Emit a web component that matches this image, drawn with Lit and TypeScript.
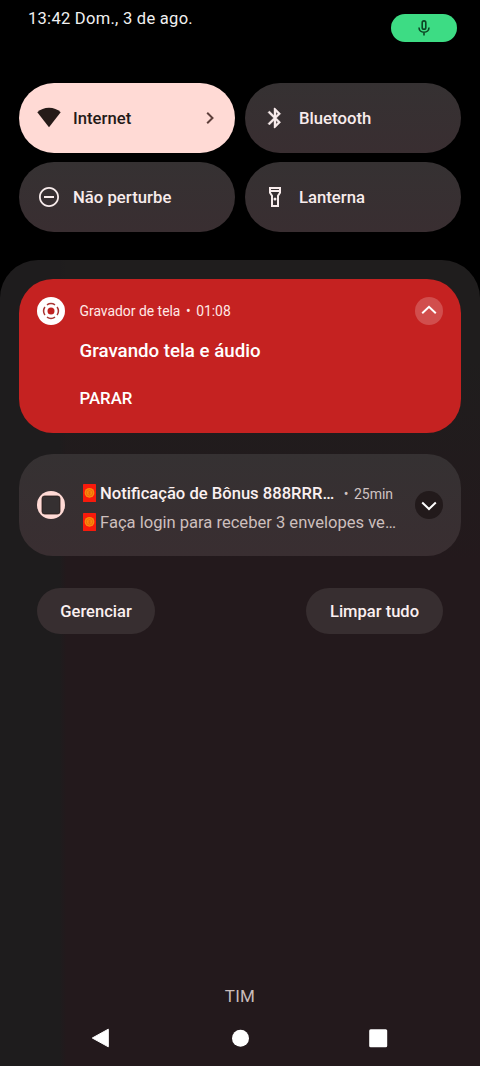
import { LitElement, html, css, svg } from "lit";
import { customElement, property } from "lit/decorators.js";

const icons = {
  wifi: svg`<path d="M.3 6.200C3.400 3.400 7.500 1.800 12 1.800s8.600 1.600 11.700 4.400L12 21.200z" fill="currentColor"/>`,
  bluetooth: svg`<path stroke="currentColor" stroke-width=".4" fill="currentColor" d="M17.710 7.710 12 2h-1v7.590L6.410 5 5 6.410 10.590 12 5 17.590 6.410 19 11 14.410V22h1l5.710-5.710L13.410 12l4.300-4.290zM13 5.830l1.880 1.880L13 9.590V5.830zm1.880 10.460L13 18.170v-3.760l1.880 1.880z"/>`,
  dnd: svg`<path fill="currentColor" d="M12 2C6.480 2 2 6.480 2 12s4.480 10 10 10 10-4.480 10-10S17.520 2 12 2zm0 18.200c-4.500 0-8.200-3.700-8.200-8.200S7.500 3.800 12 3.800s8.200 3.700 8.200 8.200-3.700 8.200-8.200 8.200zM7 11h10v2H7z"/>`,
  torch: svg`<path fill="currentColor" d="M6 2v6l2 3v11h8V11l2-3V2H6zm10 2v1H8V4h8zm-2 6.400V20h-4v-9.600L8 7.400V7h8v.4l-2 3z"/><circle cx="12" cy="14" r="1.500" fill="currentColor"/>`,
};

@customElement("quick-tile")
class QuickTile extends LitElement {
  @property() label = "";
  @property() icon: keyof typeof icons = "wifi";
  @property({ type: Boolean, reflect: true }) active = false;

  static styles = css`
    :host {
      display: flex;
      align-items: center;
      box-sizing: border-box;
      height: 70px;
      padding: 0 18.500px 0 18px;
      border-radius: 35px;
      background: linear-gradient(#353132, #392e31);
      color: #f8ecec;
    }
    :host([active]) {
      background: #ffdad5;
      color: #251a18;
    }
    .icon {
      width: 24px;
      height: 24px;
      flex: none;
    }
    .label {
      flex: 1;
      margin-left: 12.200px;
      padding-top: 2px;
      font-size: 16.700px;
      line-height: 24px;
      letter-spacing: 0.030px;
      font-weight: 500;
      white-space: nowrap;
    }
    .chevron {
      width: 14px;
      height: 14px;
      flex: none;
    }
  `;

  render() {
    return html`
      <svg class="icon" viewBox="0 0 24 24">${icons[this.icon]}</svg>
      <span class="label">${this.label}</span>
      ${this.active
        ? html`<svg class="chevron" viewBox="0 0 14 14">
            <path d="M4.200 1.700 9.500 7l-5.300 5.300" fill="none" stroke="#5d3f3b" stroke-width="2" />
          </svg>`
        : ""}
    `;
  }
}

@customElement("red-envelope")
class RedEnvelope extends LitElement {
  static styles = css`
    :host {
      display: block;
      width: 13px;
      height: 18px;
      flex: none;
    }
    .art {
      display: block;
    }
  `;
  render() {
    return html`<svg class="art" width="13" height="18" viewBox="0 0 13 18">
      <rect width="13" height="18" rx=".6" fill="#f81a0c" />
      <circle cx="6.500" cy="8.800" r="4.900" fill="#f98a0a" />
      <circle cx="6.500" cy="8.800" r="3.200" fill="none" stroke="#ea5c0c" stroke-width=".7" />
      <path d="M5 8h3M5 9.800h3M6.500 7v4" stroke="#ea5c0c" stroke-width=".6" />
    </svg>`;
  }
}

@customElement("app-root")
class AppRoot extends LitElement {
  static styles = css`
    :host {
      display: flex;
      flex-direction: column;
      width: 480px;
      height: 1066px;
      overflow: hidden;
      box-sizing: border-box;
      background: #000;
      color: #fff;
      font-family: Roboto, "Noto Sans", sans-serif;
    }
    .status {
      display: flex;
      justify-content: space-between;
      align-items: flex-start;
      height: 82.500px;
      flex: none;
      box-sizing: border-box;
      padding: 7px 23.500px 0 28px;
    }
    .clock {
      font-size: 16.500px;
      line-height: 24px;
      letter-spacing: 0.280px;
      color: #f1f1f1;
    }
    .mic {
      display: flex;
      align-items: center;
      justify-content: center;
      width: 65.500px;
      height: 28px;
      margin-top: 7px;
      border-radius: 14px;
      background: #3ddc84;
    }
    .tiles {
      display: grid;
      grid-template-columns: 216.500px 216.500px;
      gap: 9.500px;
      padding: 0 18.700px;
      flex: none;
    }
    .shade {
      display: flex;
      flex-direction: column;
      flex: 1;
      margin-top: 28px;
      padding: 18.500px 19px 0;
      border-radius: 38px 38px 0 0;
      background: linear-gradient(90deg, #1e1c1d 60px, rgba(30, 28, 29, 0) 66px),
        linear-gradient(#1f1d1d 100px, #23191c 300px);
    }
    .recorder {
      display: grid;
      grid-template-columns: 28px 1fr 28px;
      column-gap: 14px;
      height: 154px;
      flex: none;
      box-sizing: border-box;
      padding: 18px 18.500px 0 18px;
      align-content: start;
      border-radius: 34px;
      background: #c52221;
    }
    .glyph {
      display: block;
      width: 28px;
      height: 28px;
      flex: none;
    }
    .app {
      display: flex;
      gap: 5.500px;
      margin-left: 0.500px;
      font-size: 13.900px;
      line-height: 29px;
      color: #ffe9e6;
    }
    .title {
      grid-column: 2;
      margin: 12px 0 0 0.500px;
      font-size: 18.700px;
      line-height: 26px;
      font-weight: 500;
    }
    .action {
      grid-column: 2;
      margin: 22.500px 0 0 0.500px;
      font-size: 16.800px;
      line-height: 24px;
      font-weight: 500;
    }
    .notice {
      display: flex;
      align-items: center;
      height: 102px;
      flex: none;
      box-sizing: border-box;
      margin-top: 21.500px;
      padding: 0 18.500px 0 18px;
      border-radius: 34px;
      background: linear-gradient(#353132, #392e31);
    }
    .lines {
      flex: 1;
      min-width: 0;
      margin: 5.500px 0 0 18px;
    }
    .line {
      display: flex;
      align-items: center;
      height: 29px;
      white-space: nowrap;
    }
    .headline {
      margin-left: 4px;
      font-size: 16.600px;
      font-weight: 500;
      color: #fbf0f0;
    }
    .age {
      display: flex;
      gap: 5.500px;
      padding-top: 1px;
      margin-left: 9.500px;
      font-size: 14px;
      color: #cfc3c2;
    }
    .body {
      margin-left: 4px;
      font-size: 16.570px;
      color: #cdbfbd;
    }
    .actions {
      display: flex;
      justify-content: space-between;
      margin-top: 32px;
      padding: 0 18px;
    }
    .pill {
      display: flex;
      align-items: center;
      justify-content: center;
      box-sizing: border-box;
      width: 118px;
      height: 46px;
      padding-top: 1px;
      border-radius: 23px;
      background: #372e30;
      color: #fbf0f0;
      font-size: 16.550px;
      font-weight: 500;
    }
    .wide {
      width: 137px;
    }
    .carrier {
      margin-top: auto;
      text-align: center;
      font-size: 17px;
      line-height: 24px;
      letter-spacing: 0.300px;
      color: #c9bcba;
    }
    .nav {
      display: flex;
      justify-content: space-between;
      align-items: center;
      height: 20px;
      margin: 20px 73px 18px 72px;
    }
  `;

  render() {
    return html`
      <div class="status">
        <span class="clock">13:42 Dom., 3 de ago.</span>
        <span class="mic">
          <svg width="18" height="18" viewBox="0 0 18 18" fill="none" stroke="#0d4524" stroke-width="1.600">
            <rect x="7.200" y="1.900" width="3.600" height="8.400" rx="1.800" />
            <path d="M4 8.500c0 2.900 2.200 4.700 5 4.700s5-1.800 5-4.700M9 13.200v3.300" />
          </svg>
        </span>
      </div>

      <div class="tiles">
        <quick-tile label="Internet" icon="wifi" active></quick-tile>
        <quick-tile label="Bluetooth" icon="bluetooth"></quick-tile>
        <quick-tile label="Não perturbe" icon="dnd"></quick-tile>
        <quick-tile label="Lanterna" icon="torch"></quick-tile>
      </div>

      <div class="shade">
        <section class="recorder">
          <svg class="glyph" viewBox="0 0 28 28">
            <circle cx="14" cy="14" r="14" fill="#fff" />
            <circle cx="14" cy="14" r="3.500" fill="#c0201f" />
            <g fill="none" stroke="#a83432" stroke-width="1.500">
              <path d="M9.970 7.910a7.300 7.300 0 0 1 8.060 0M20.090 9.970a7.300 7.300 0 0 1 0 8.060M18.030 20.090a7.300 7.300 0 0 1-8.060 0M7.910 18.030a7.300 7.300 0 0 1 0-8.060" />
            </g>
          </svg>
          <span class="app"><span>Gravador de tela</span><span>•</span><span>01:08</span></span>
          <svg class="glyph" viewBox="0 0 28 28">
            <circle cx="14" cy="14" r="14" fill="#d14e4d" />
            <path d="m7.200 16.300 6.800-6.500 6.800 6.500" fill="none" stroke="#fff" stroke-width="2" />
          </svg>
          <span class="title">Gravando tela e áudio</span>
          <span class="action">PARAR</span>
        </section>

        <section class="notice">
          <svg class="glyph" viewBox="0 0 28 28">
            <circle cx="14" cy="14" r="14" fill="#ffdad5" />
            <rect x="5" y="5" width="18" height="18" rx="2.500" fill="#353031" stroke="#2a1a18" stroke-width=".8" />
          </svg>
          <div class="lines">
            <div class="line">
              <red-envelope></red-envelope>
              <span class="headline">Notificação de Bônus 888RRR…</span>
              <span class="age"><span>•</span><span>25min</span></span>
            </div>
            <div class="line">
              <red-envelope></red-envelope>
              <span class="body">Faça login para receber 3 envelopes ve…</span>
            </div>
          </div>
          <svg class="glyph" viewBox="0 0 28 28">
            <circle cx="14" cy="14" r="14" fill="#221a1b" />
            <path d="m7.200 11.500 6.800 6.500 6.800-6.500" fill="none" stroke="#fff" stroke-width="2" />
          </svg>
        </section>

        <div class="actions">
          <span class="pill">Gerenciar</span>
          <span class="pill wide">Limpar tudo</span>
        </div>

        <div class="carrier">TIM</div>
        <div class="nav">
          <svg width="20" height="20" viewBox="0 0 20 20">
            <path d="M17.300 1.200v17.600L1.300 10z" fill="#fff" stroke="#fff" stroke-linejoin="round" />
          </svg>
          <svg width="20" height="20" viewBox="0 0 20 20"><circle cx="10.500" cy="10.200" r="8.500" fill="#fff" /></svg>
          <svg width="20" height="20" viewBox="0 0 20 20">
            <rect x="1.200" y="1.200" width="18" height="18" rx="1.500" fill="#fff" />
          </svg>
        </div>
      </div>
    `;
  }
}
